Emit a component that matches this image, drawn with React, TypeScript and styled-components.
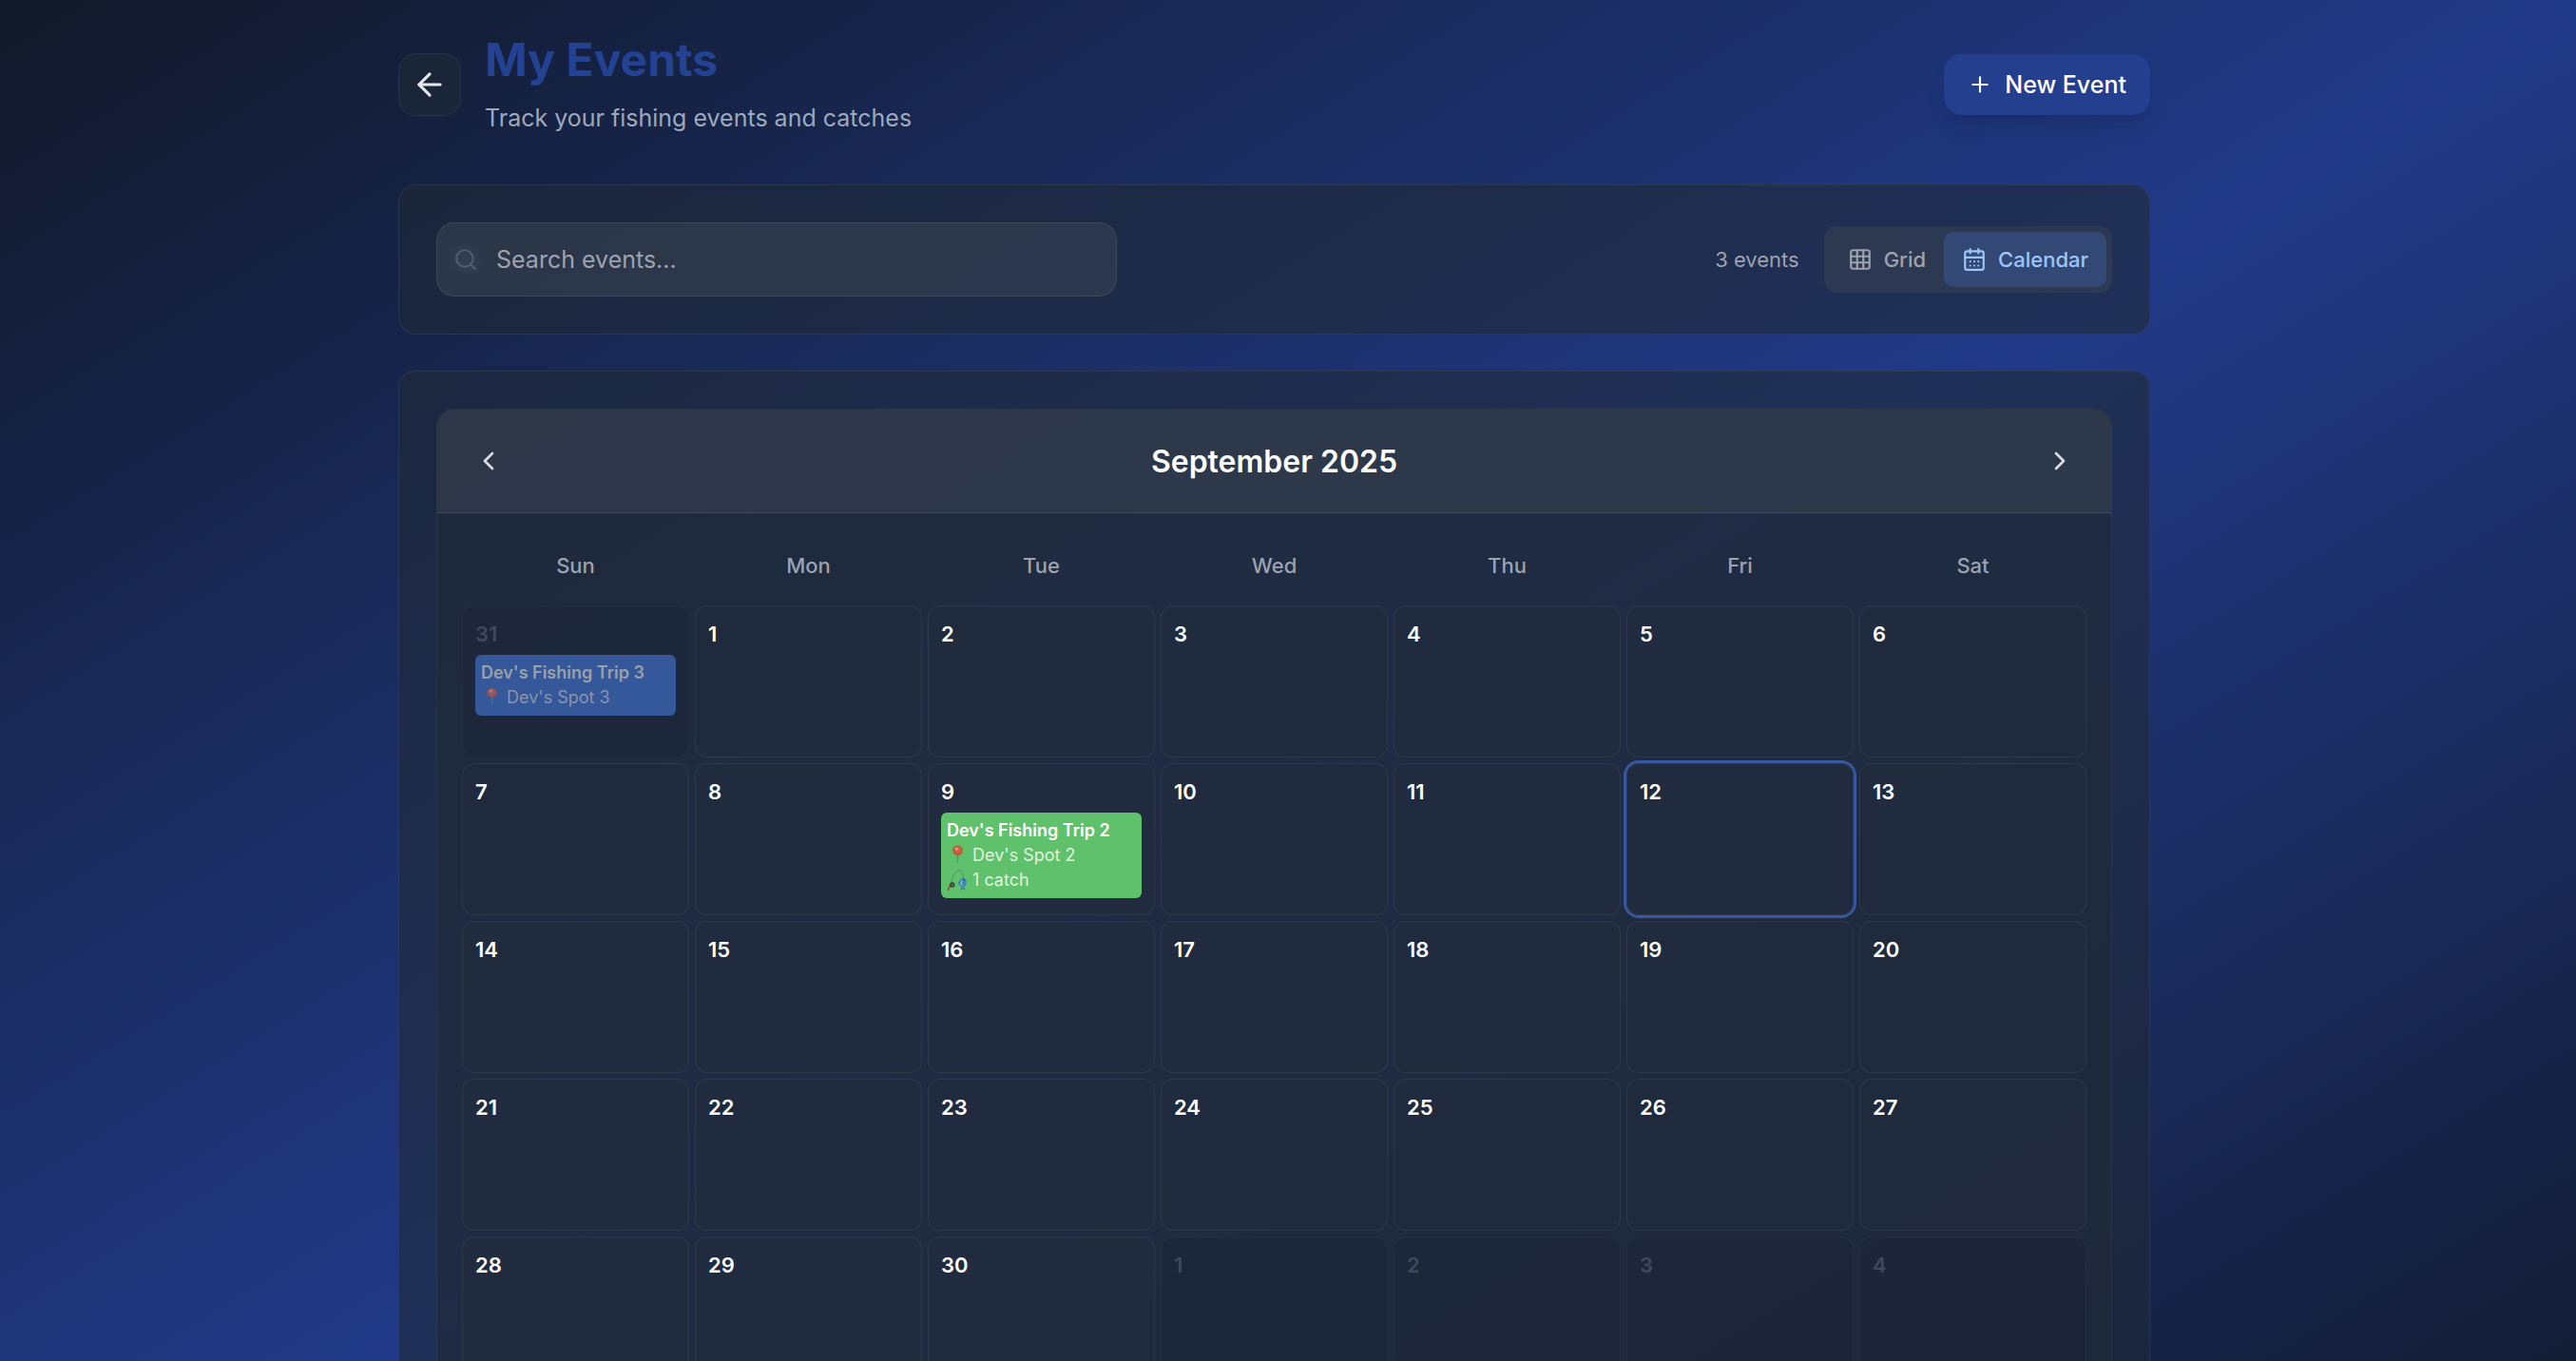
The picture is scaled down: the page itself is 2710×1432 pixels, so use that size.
import React from "react";
import styled, { createGlobalStyle } from "styled-components";
import { ArrowLeft, CalendarDays, ChevronLeft, ChevronRight, Grid3x3, Plus, Search } from "lucide-react";

const GlobalStyle = createGlobalStyle`
  *, *::before, *::after { box-sizing: border-box; }
  html, body { margin: 0; padding: 0; background: #111827; }
  body, button, input { font-family: Inter, "Liberation Sans", sans-serif; }
  h1, h2, p { margin: 0; }
  button { border: 0; padding: 0; background: none; color: inherit; cursor: pointer; }
`;

const Viewport = styled.div`
  height: 100vh;
  overflow-y: auto;
  scrollbar-width: none;
`;

const Page = styled.main`
  min-height: 100vh;
  padding: 34px 29px 148px 0;
  background: linear-gradient(to bottom right, #111827, #213a88 50%, #111827);
  color: #ffffff;
`;

const Container = styled.div`
  width: 100%;
  max-width: 1843px;
  margin: 0 auto;
`;

const PageHeader = styled.header`
  display: flex;
  align-items: center;
  justify-content: space-between;
  margin-bottom: 51px;
`;

const HeaderLeft = styled.div`
  display: flex;
  align-items: center;
  gap: 25px;
`;

const BackButton = styled.button`
  display: grid;
  place-items: center;
  width: 66px;
  height: 66px;
  border: 1px solid rgba(75, 85, 99, 0.3);
  border-radius: 19px;
  background: rgba(31, 41, 55, 0.6);
  color: #e5e7eb;
`;

const Titles = styled.div`
  display: flex;
  flex-direction: column;
  gap: 13px;
`;

const Title = styled.h1`
  font-size: 48px;
  line-height: 58px;
  font-weight: 700;
  color: #234292;
`;

const Subtitle = styled.p`
  font-size: 25px;
  line-height: 38px;
  color: #9ca9bd;
`;

const PrimaryButton = styled.button`
  display: flex;
  align-items: center;
  gap: 13px;
  height: 64px;
  padding: 0 25px;
  border-radius: 19px;
  background: #233f8e;
  color: #ffffff;
  font-size: 25px;
  line-height: 38px;
  font-weight: 500;
  box-shadow: 0 16px 24px -5px rgba(0, 0, 0, 0.1), 0 6px 10px -6px rgba(0, 0, 0, 0.1);
`;

const Card = styled.section`
  padding: 39px;
  border: 1px solid rgba(55, 65, 81, 0.6);
  border-radius: 19px;
  background: rgba(31, 41, 55, 0.6);
`;

const FilterCard = styled(Card)`
  display: flex;
  align-items: center;
  justify-content: space-between;
  margin-bottom: 38px;
`;

const SearchBox = styled.label`
  display: flex;
  align-items: center;
  gap: 19px;
  flex: 0 1 716px;
  height: 78px;
  padding: 0 19px 0 17px;
  border: 1px solid rgba(75, 85, 99, 0.6);
  border-radius: 19px;
  background: rgba(55, 65, 81, 0.6);
  color: #505c6b;

  svg { filter: drop-shadow(0 0 7px rgba(85, 105, 120, 0.9)); }
`;

const SearchInput = styled.input`
  flex: 1;
  min-width: 0;
  padding: 0;
  border: 0;
  outline: 0;
  background: none;
  color: #ffffff;
  font-size: 25px;
  line-height: 38px;

  &::placeholder { color: #9ca3af; opacity: 1; }
`;

const FilterRight = styled.div`
  display: flex;
  align-items: center;
  gap: 26px;
`;

const EventCount = styled.span`
  font-size: 22px;
  line-height: 32px;
  color: #9ca3af;
`;

const ViewToggle = styled.div`
  display: flex;
  padding: 6px;
  border-radius: 13px;
  background: rgba(55, 65, 81, 0.6);
`;

const ToggleButton = styled.button<{ $active?: boolean }>`
  display: flex;
  align-items: center;
  gap: 12px;
  height: 58px;
  padding: 0 19px;
  border-radius: 10px;
  background: ${(p) => (p.$active ? "rgba(59, 98, 170, 0.4)" : "transparent")};
  color: ${(p) => (p.$active ? "#9cc6fb" : "#9ca3af")};
  font-size: 22px;
  line-height: 32px;
  font-weight: 500;
`;

const Calendar = styled.div`
  overflow: hidden;
  border: 1px solid rgba(55, 65, 81, 0.5);
  border-radius: 19px;
  background: rgba(31, 41, 55, 0.6);
`;

const MonthBar = styled.div`
  display: flex;
  align-items: center;
  justify-content: space-between;
  padding: 25px;
  border-bottom: 1px solid rgba(75, 85, 99, 0.6);
  background: rgba(55, 65, 81, 0.6);
`;

const MonthTitle = styled.h2`
  font-size: 32px;
  line-height: 45px;
  font-weight: 600;
`;

const NavButton = styled.button`
  display: grid;
  place-items: center;
  width: 58px;
  height: 58px;
  border-radius: 13px;
  color: #d9dde4;
`;

const MonthBody = styled.div`
  padding: 20px;
`;

const MonthTable = styled.table`
  width: 100%;
  table-layout: fixed;
  border-collapse: separate;
  border-spacing: 6px;
`;

const Weekday = styled.th`
  padding: 13px 13px 20px;
  font-size: 22px;
  line-height: 32px;
  font-weight: 500;
  color: #9ca3af;
`;

const Day = styled.td<{ $muted?: boolean; $today?: boolean }>`
  height: 160px;
  padding: 13px;
  border: 1px solid ${(p) => (p.$muted ? "rgba(55, 65, 81, 0.3)" : "rgba(55, 65, 81, 0.6)")};
  border-radius: 13px;
  background: ${(p) => (p.$muted ? "rgba(27, 36, 54, 0.4)" : "rgba(34, 43, 62, 0.6)")};
  box-shadow: ${(p) => (p.$today ? "0 0 0 3px #3558a0" : "none")};
  vertical-align: top;
`;

const DayNumber = styled.div<{ $muted?: boolean }>`
  margin-bottom: 6px;
  font-size: 22px;
  line-height: 32px;
  font-weight: 600;
  color: ${(p) => (p.$muted ? "#3f4959" : "#ffffff")};
`;

const EventButton = styled.button<{ $tone: "blue" | "green" }>`
  display: block;
  width: 100%;
  padding: 6px;
  border-radius: 6px;
  background: ${(p) => (p.$tone === "green" ? "#5fc16b" : "#345899")};
  color: ${(p) => (p.$tone === "green" ? "#ffffff" : "#99a0ac")};
  font-size: 18px;
  line-height: 26px;
  text-align: left;
`;

const EventName = styled.div`
  font-weight: 600;
  white-space: nowrap;
`;

const EventMeta = styled.div<{ $tone: "blue" | "green" }>`
  display: flex;
  align-items: center;
  gap: 4px;
  color: ${(p) => (p.$tone === "green" ? "#dff3e1" : "#8994ad")};

  svg { opacity: ${(p) => (p.$tone === "green" ? 0.9 : 0.6)}; }
`;

const PinIcon = () => (
  <svg width="23" height="23" viewBox="0 0 23 23" aria-hidden="true">
    <path d="M10.700 9h1.700l-.3 9-.5 1.500-.5-1.500z" fill="#6f7f80" />
    <circle cx="11.500" cy="5.800" r="5.300" fill="#c8472f" />
    <circle cx="11.500" cy="5.200" r="3.800" fill="#d35b40" />
    <circle cx="10.300" cy="4" r="1.600" fill="#eba08d" />
  </svg>
);

const FishingIcon = () => (
  <svg width="23" height="23" viewBox="0 0 23 23" aria-hidden="true" fill="none">
    <path d="M1.500 21 4.500 14.500" stroke="#8a5f3c" strokeWidth="2" strokeLinecap="round" />
    <path d="M4.500 14.500C6.500 8 8.500 1 12.500 1c2.800 0 4.500 2 5 6.500" stroke="#5f8068" strokeWidth="1" />
    <circle cx="5.800" cy="16" r="2.700" fill="#2f3a38" />
    <circle cx="5.800" cy="16" r="1" fill="#6b7673" />
    <path d="M17.500 8c3 1.500 4.500 5 2.300 8.500L18 18l2.500 3.500-3.300-1-3.200 1L15.700 18c-3.200-1.500-4.700-4-3.200-5.500 1.500-.5 1.500-3.500 5-4.500z" fill="#3d7fb8" />
    <path d="M16 11c-1.200 2-.8 4 .5 5.500" stroke="#8cc4ea" strokeWidth="1.200" />
    <circle cx="18" cy="10.800" r=".8" fill="#16324a" />
  </svg>
);

type Event = { name: string; spot: string; catches?: string; tone: "blue" | "green" };

const events: Record<string, Event> = {
  "8-31": { name: "Dev's Fishing Trip 3", spot: "Dev's Spot 3", tone: "blue" },
  "9-9": { name: "Dev's Fishing Trip 2", spot: "Dev's Spot 2", catches: "1 catch", tone: "green" },
};

const weekdays = ["Sun", "Mon", "Tue", "Wed", "Thu", "Fri", "Sat"];

const days = Array.from({ length: 35 }, (_, i) => {
  const date = new Date(2025, 7, 31 + i);
  return { month: date.getMonth() + 1, day: date.getDate() };
});

const weeks = [0, 7, 14, 21, 28].map((start) => days.slice(start, start + 7));

const EventChip = ({ event }: { event: Event }) => (
  <EventButton type="button" $tone={event.tone}>
    <EventName>{event.name}</EventName>
    <EventMeta $tone={event.tone}>
      <PinIcon />
      {event.spot}
    </EventMeta>
    {event.catches && (
      <EventMeta $tone={event.tone}>
        <FishingIcon />
        {event.catches}
      </EventMeta>
    )}
  </EventButton>
);

export default function App() {
  return (
    <Viewport>
      <GlobalStyle />
      <Page>
        <Container>
          <PageHeader>
            <HeaderLeft>
              <BackButton type="button" aria-label="Back">
                <ArrowLeft size={38} />
              </BackButton>
              <Titles>
                <Title>My Events</Title>
                <Subtitle>Track your fishing events and catches</Subtitle>
              </Titles>
            </HeaderLeft>
            <PrimaryButton type="button">
              <Plus size={26} />
              New Event
            </PrimaryButton>
          </PageHeader>

          <FilterCard>
            <SearchBox>
              <Search size={26} />
              <SearchInput type="text" placeholder="Search events..." aria-label="Search events" />
            </SearchBox>
            <FilterRight>
              <EventCount>3 events</EventCount>
              <ViewToggle>
                <ToggleButton type="button">
                  <Grid3x3 size={26} />
                  Grid
                </ToggleButton>
                <ToggleButton type="button" $active>
                  <CalendarDays size={26} />
                  Calendar
                </ToggleButton>
              </ViewToggle>
            </FilterRight>
          </FilterCard>

          <Card>
            <Calendar>
              <MonthBar>
                <NavButton type="button" aria-label="Previous month">
                  <ChevronLeft size={32} />
                </NavButton>
                <MonthTitle>September 2025</MonthTitle>
                <NavButton type="button" aria-label="Next month">
                  <ChevronRight size={32} />
                </NavButton>
              </MonthBar>
              <MonthBody>
                <MonthTable>
                  <thead>
                    <tr>
                      {weekdays.map((name) => (
                        <Weekday key={name} scope="col">
                          {name}
                        </Weekday>
                      ))}
                    </tr>
                  </thead>
                  <tbody>
                    {weeks.map((week, i) => (
                      <tr key={i}>
                        {week.map(({ month, day }) => {
                          const muted = month !== 9;
                          const event = events[`${month}-${day}`];
                          return (
                            <Day key={day} $muted={muted} $today={month === 9 && day === 12}>
                              <DayNumber $muted={muted}>{day}</DayNumber>
                              {event && <EventChip event={event} />}
                            </Day>
                          );
                        })}
                      </tr>
                    ))}
                  </tbody>
                </MonthTable>
              </MonthBody>
            </Calendar>
          </Card>
        </Container>
      </Page>
    </Viewport>
  );
}
